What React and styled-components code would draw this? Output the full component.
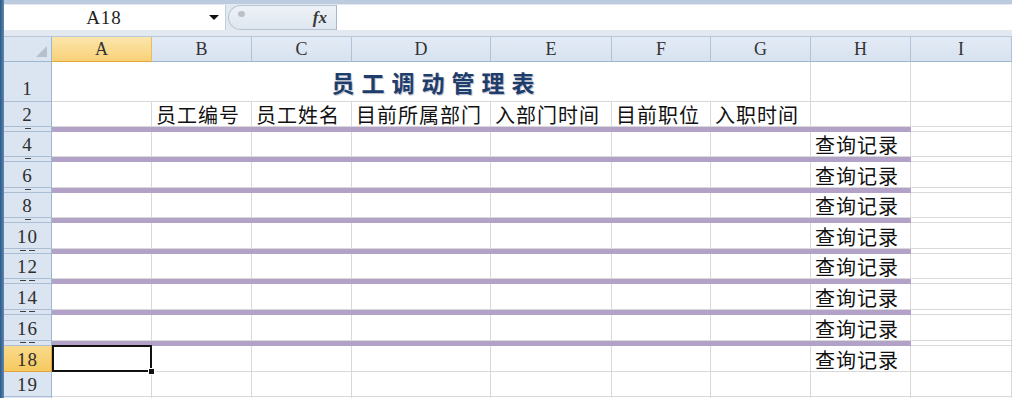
import React from 'react';
import styled, { createGlobalStyle, css } from 'styled-components';

const COLS = '48px 100px 100px 100px 139px 121px 99px 100px 100px 101px';
const GRID = '#d9d9d9';
const HDR_BG = '#dbe5f1';
const HDR_LINE = '#9eb6ce';

const GlobalStyle = createGlobalStyle`
  html, body { margin: 0; padding: 0; width: 1012px; height: 398px; overflow: hidden; background: #fff; }
  body { font-family: "Noto Sans CJK SC", "Noto Sans", sans-serif; }
`;

const Frame = styled.div`
  display: flex;
  width: 1012px;
  height: 398px;
  overflow: hidden;
  background: #fff;
`;

const Strip = styled.div`
  width: 4px;
  flex: none;
  background: linear-gradient(to right, #2c5a86, #5d88b2);
`;

const Main = styled.div`
  flex: 1;
  display: flex;
  flex-direction: column;
  min-width: 0;
`;

/* ---------- formula bar ---------- */
const FormulaBar = styled.div`
  height: 37px;
  flex: none;
  box-sizing: border-box;
  display: flex;
  padding: 5px 0 6px 0;
  background: linear-gradient(to bottom, #bccbdd 0, #bccbdd 4px, #e3e9f1 4px, #e3e9f1 100%);
  border-bottom: 1px solid #b9c7d8;
`;

const NameBox = styled.div`
  width: 221px;
  flex: none;
  display: flex;
  align-items: center;
  background: #fff;
  border-right: 1px solid #c3cfdd;
`;

const NameText = styled.span`
  flex: 1;
  text-align: center;
  font-family: "Liberation Serif", serif;
  font-size: 19px;
  letter-spacing: 1px;
  color: #1e1e1e;
  padding-left: 2px;
`;

const DropArrow = styled.span`
  width: 23px;
  display: flex;
  justify-content: center;
  &::before {
    content: '';
    border-left: 5px solid transparent;
    border-right: 5px solid transparent;
    border-top: 5px solid #111;
  }
`;

const FuncArea = styled.div`
  width: 108px;
  flex: none;
  display: flex;
  align-items: center;
  justify-content: space-between;
  box-sizing: border-box;
  background: linear-gradient(to bottom, #eef2f7, #dfe6ef);
  border: 1px solid #b6c3d3;
  border-right: none;
  border-radius: 13px 0 0 13px;
  margin-left: 2px;
`;

const Knob = styled.span`
  width: 7px;
  height: 6px;
  margin: 0 0 8px 9px;
  border-radius: 50%;
  background: #b9c0c9;
`;

const Fx = styled.span`
  font-family: "Liberation Serif", serif;
  font-style: italic;
  font-weight: 700;
  font-size: 17px;
  color: #3a3a3a;
  margin-right: 9px;
`;

const FormulaInput = styled.div`
  flex: 1;
  background: #fff;
  border-left: 1px solid #a9b7c8;
`;

/* ---------- sheet ---------- */
const Sheet = styled.div`
  display: flex;
  flex-direction: column;
`;

const SheetRow = styled.div`
  display: grid;
  grid-template-columns: ${COLS};
  height: ${p => p.$h}px;
  flex: none;
`;

const Corner = styled.div`
  box-sizing: border-box;
  background: ${HDR_BG};
  border-right: 1px solid ${HDR_LINE};
  border-bottom: 1px solid ${HDR_LINE};
  display: flex;
  align-items: flex-end;
  justify-content: flex-end;
  padding: 0 4px 4px 0;
`;

const ColHead = styled.div`
  box-sizing: border-box;
  background: ${p => (p.$sel ? 'linear-gradient(to bottom, #fbe6ab, #f8d178)' : 'linear-gradient(to bottom, #e2eaf5, #d8e3f0)')};
  border-right: 1px solid ${p => (p.$sel ? '#e9bd62' : '#b0c2d8')};
  border-bottom: 1px solid ${p => (p.$sel ? '#e3a63c' : HDR_LINE)};
  display: flex;
  align-items: center;
  justify-content: center;
  font-family: "Liberation Serif", serif;
  font-size: 18px;
  color: #333;
`;

const RowHead = styled.div`
  box-sizing: border-box;
  background: ${p => (p.$sel ? 'linear-gradient(to bottom, #f9da8c, #f5c95e)' : HDR_BG)};
  border-right: 1px solid ${p => (p.$sel ? '#e2a23a' : HDR_LINE)};
  border-bottom: 1px solid ${p => (p.$sel ? '#e2a23a' : '#aabdd2')};
  display: flex;
  align-items: flex-end;
  justify-content: center;
  font-family: "Liberation Serif", serif;
  font-size: 19px;
  letter-spacing: 1px;
  line-height: ${p => (p.$tall ? '25px' : '22px')};
  color: #2e2e2e;
`;

const GapHead = styled.div`
  box-sizing: border-box;
  background: ${HDR_BG};
  border-right: 1px solid ${HDR_LINE};
  border-bottom: 1px solid #aabdd2;
  display: flex;
  justify-content: center;
  gap: 3px;
  padding-top: 1px;
`;

const Dash = styled.span`
  width: 6px;
  height: 1px;
  background: #3e3e3e;
`;

const Cell = styled.div`
  box-sizing: border-box;
  border-right: 1px solid ${GRID};
  border-bottom: 1px solid ${GRID};
  padding: 0 3px 0 4px;
  display: flex;
  align-items: flex-end;
  font-size: 20px;
  line-height: 23px;
  letter-spacing: 1px;
  color: #111;
  white-space: nowrap;
  position: relative;
  ${p =>
    p.$selected &&
    css`
      &::after {
        content: '';
        position: absolute;
        left: 0;
        top: -1px;
        right: -1px;
        bottom: -1px;
        border: 2px solid #111;
      }
      &::before {
        content: '';
        position: absolute;
        right: -4px;
        bottom: -4px;
        width: 5px;
        height: 5px;
        background: #111;
        border: 1px solid #fff;
        z-index: 2;
      }
    `}
`;

const TitleCell = styled(Cell)`
  grid-column: span 7;
  justify-content: center;
  align-items: center;
  padding-left: 14px;
  font-weight: 700;
  font-size: 23px;
  line-height: 30px;
  letter-spacing: 7px;
  color: #1f3d6b;
  text-shadow: 1px 1px 1px rgba(40, 60, 100, 0.35);
`;

const Band = styled.div`
  grid-column: span 8;
  background: #b3a2c8;
`;

const BandTail = styled.div`
  box-sizing: border-box;
  border-right: 1px solid ${GRID};
  border-bottom: 1px solid ${GRID};
`;

const LETTERS = ['A', 'B', 'C', 'D', 'E', 'F', 'G', 'H', 'I'];
const HEADS = ['员工编号', '员工姓名', '目前所属部门', '入部门时间', '目前职位', '入职时间'];

const DATA_ROWS = [
  { n: 4, h: 25 },
  { n: 6, h: 26 },
  { n: 8, h: 25 },
  { n: 10, h: 26 },
  { n: 12, h: 25 },
  { n: 14, h: 26 },
  { n: 16, h: 26 },
];

function CornerTriangle() {
  return (
    <svg width="11" height="11" viewBox="0 0 11 11">
      <polygon points="11,0 11,11 0,11" fill="#b4c0ce" />
    </svg>
  );
}

function Gap({ n }) {
  const dashes = String(n).length;
  return (
    <SheetRow $h={5}>
      <GapHead>
        {Array.from({ length: dashes }).map((_, i) => (
          <Dash key={i} />
        ))}
      </GapHead>
      <Band />
      <BandTail />
    </SheetRow>
  );
}

function DataRow({ n, h, selected, text, label = true }) {
  return (
    <SheetRow $h={h}>
      <RowHead $sel={selected}>{label ? n : ''}</RowHead>
      {LETTERS.map((l, i) => (
        <Cell key={l} $selected={selected && i === 0}>
          {l === 'H' && text ? text : ''}
        </Cell>
      ))}
    </SheetRow>
  );
}

export default function App() {
  return (
    <>
      <GlobalStyle />
      <Frame>
        <Strip />
        <Main>
          <FormulaBar>
            <NameBox>
              <NameText>A18</NameText>
              <DropArrow />
            </NameBox>
            <FuncArea>
              <Knob />
              <Fx>fx</Fx>
            </FuncArea>
            <FormulaInput />
          </FormulaBar>
          <Sheet>
            <SheetRow $h={25}>
              <Corner>
                <CornerTriangle />
              </Corner>
              {LETTERS.map((l, i) => (
                <ColHead key={l} $sel={i === 0}>
                  {l}
                </ColHead>
              ))}
            </SheetRow>

            <SheetRow $h={40}>
              <RowHead $tall>1</RowHead>
              <TitleCell>员工调动管理表</TitleCell>
              <Cell />
              <Cell />
            </SheetRow>

            <SheetRow $h={25}>
              <RowHead>2</RowHead>
              <Cell />
              {HEADS.map(t => (
                <Cell key={t}>{t}</Cell>
              ))}
              <Cell />
              <Cell />
            </SheetRow>
            <Gap n={3} />

            {DATA_ROWS.map(r => (
              <React.Fragment key={r.n}>
                <DataRow n={r.n} h={r.h} text="查询记录" />
                <Gap n={r.n + 1} />
              </React.Fragment>
            ))}

            <DataRow n={18} h={26} selected text="查询记录" />
            <DataRow n={19} h={25} />
            <DataRow n={20} h={25} label={false} />
          </Sheet>
        </Main>
      </Frame>
    </>
  );
}
